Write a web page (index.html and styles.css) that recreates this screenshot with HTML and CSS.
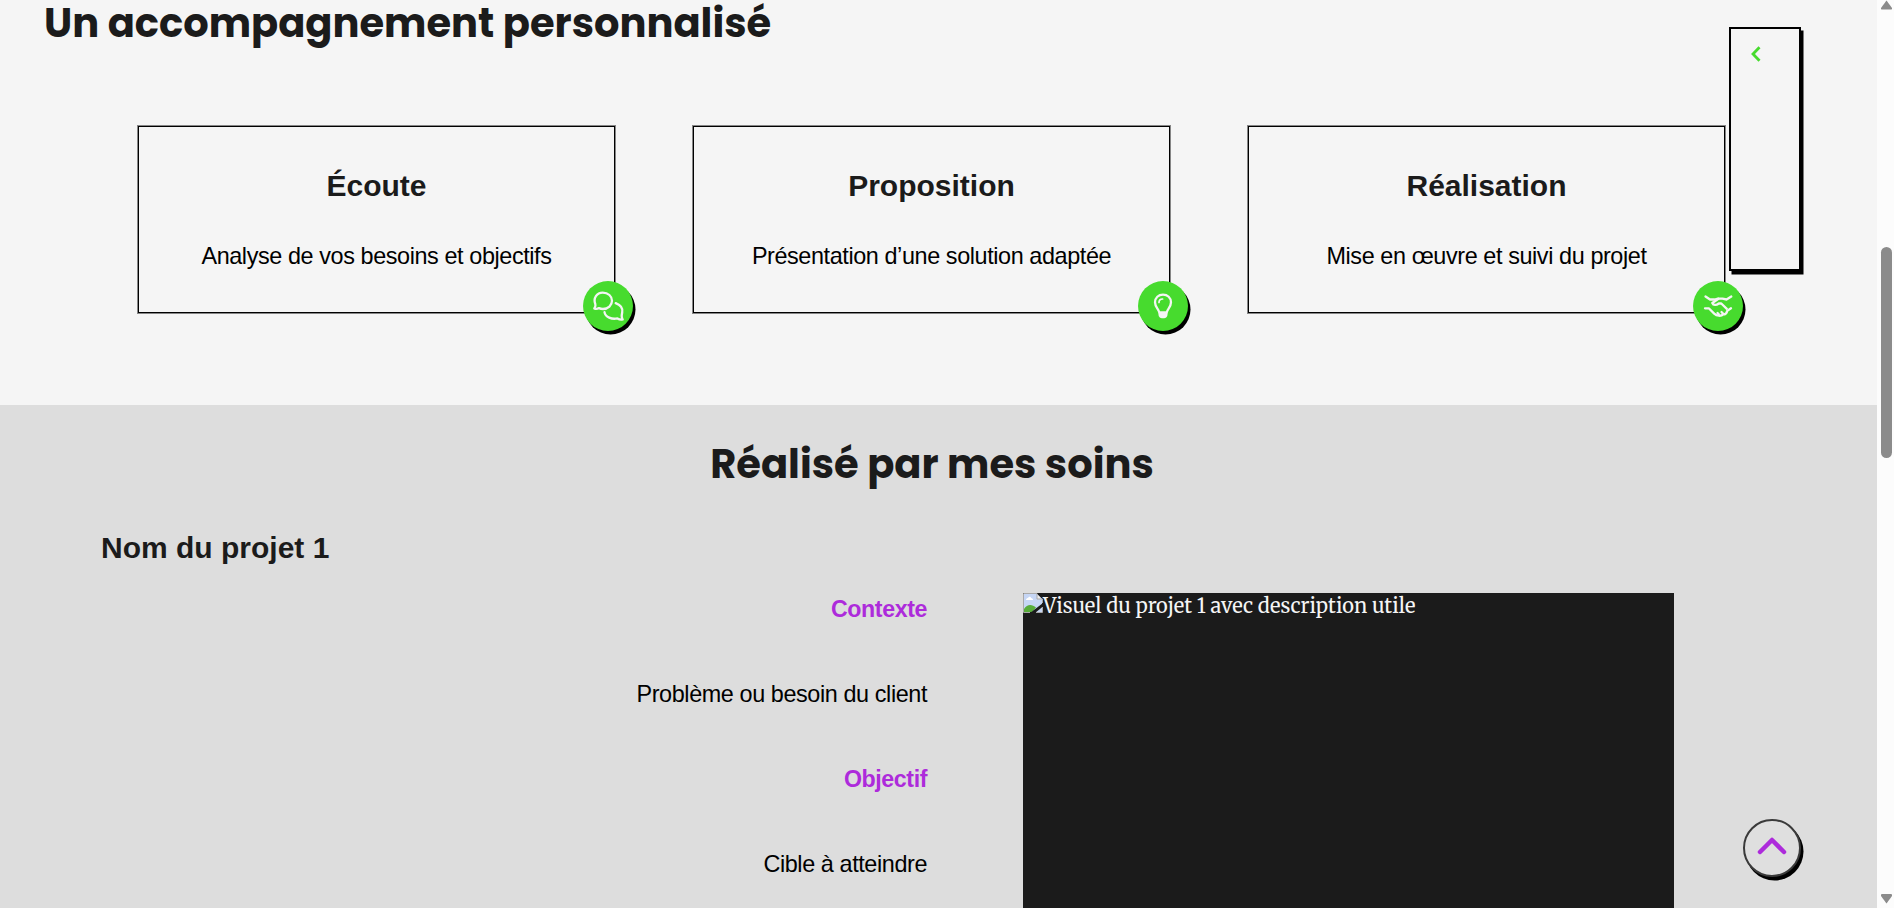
FILE: index.html
```html
<!DOCTYPE html>
<html lang="fr">
<head>
<meta charset="utf-8">
<title>Un accompagnement personnalisé</title>
<link rel="stylesheet" href="styles.css">
</head>
<body>
<div class="page">
  <main class="content">
    <section class="support">
      <h2 class="title title-support">Un accompagnement personnalisé</h2>
      <div class="cards">
        <article class="card">
          <h3 class="card-title">Écoute</h3>
          <p class="card-text">Analyse de vos besoins et objectifs</p>
          <span class="badge"><svg width="50" height="50" viewBox="0 0 50 50"><path d="M11.300 27.500c1.300-1.700 1.500-3 1-4.400C10 17 13.800 11.600 19.700 11.600c5.500 0 9.300 3.700 9.300 8.200s-3.900 8.200-9 8.200c-1.500 0-2.800-.3-4-.9-1.500.9-3 1.200-4.700.4z"/><path d="M32.700 22.200c4.500 1.700 7.300 5.200 6.500 9.300-.3 1.700-.5 2.500-.5 3.500 0 1.400.4 2.500 1 3.500-2 .5-3.700-.1-5.300-1.100-5.500 1.300-12.100-1.300-12.900-6.300"/></svg></span>
        </article>
        <article class="card">
          <h3 class="card-title">Proposition</h3>
          <p class="card-text">Présentation d’une solution adaptée</p>
          <span class="badge"><svg width="50" height="50" viewBox="0 0 50 50"><path d="M21.300 31.500c-.5-3.500-4.300-5.300-4.300-10.200 0-4.600 3.500-7.700 8-7.700s8 3.100 8 7.700c0 4.900-3.800 6.700-4.300 10.200z"/><path class="thin" d="M21 21.500c0-2 1.500-3.500 3.600-3.500"/><path class="solid" d="M20.500 32h9v1.500c0 2.200-1.600 3.700-3.500 3.700h-2c-1.900 0-3.500-1.500-3.500-3.700z"/></svg></span>
        </article>
        <article class="card">
          <h3 class="card-title">Réalisation</h3>
          <p class="card-text">Mise en œuvre et suivi du projet</p>
          <span class="badge"><svg width="50" height="50" viewBox="0 0 50 50"><path d="M12.500 15.500l4.500 3h4.500l3.500-.8h4.500l4 .8 4.800-3"/><path d="M25.500 17.800l-6.200 4.200c1 2.500 4 2.500 6.500.5h2.500l5.500 5.300"/><path d="M12 27.300h3.800l5.400 5.300c2.600 2.400 6.800 3 9 .8 2.700 0 3.500-1.200 4-3.500l3.800-2.600"/><path d="M24.500 32l1.300 1.300M28.500 31l1.500 1.600"/></svg></span>
        </article>
      </div>
    </section>
    <section class="work">
      <h2 class="title title-work">Réalisé par mes soins</h2>
      <h3 class="project-title">Nom du projet 1</h3>
      <div class="project">
        <div class="details">
          <h4 class="label">Contexte</h4>
          <p class="value">Problème ou besoin du client</p>
          <h4 class="label">Objectif</h4>
          <p class="value">Cible à atteindre</p>
        </div>
        <div class="visual">
          <svg class="broken" width="20" height="20" viewBox="0 0 20 20"><path fill="#c6d6f5" d="M1 1h13l5 5v13H1z"/><path fill="#fff" d="M3 7c0-1.500 1.500-2 2-2 1-2 3-1.500 3 0 1.500 0 2 1 2 2z"/><path fill="#58ad3b" d="M1 19v-3c3-5 8-5 12-1.500L9 19z"/><path fill="#1b1b1b" d="M7 20L20 10v3.500L12 20z"/><path fill="#eee" d="M14 1v5h5z"/><path fill="none" stroke="#a9a9a9" d="M7 19.500H.5V.5H14M14 .5V6h5.500M13 19.500h6.500V14M19.500 10V6"/></svg><span class="alt">Visuel du projet 1 avec description utile</span>
        </div>
      </div>
    </section>
  </main>
  <div class="scrollbar">
    <svg width="17" height="12" viewBox="0 0 17 12"><path d="M9.500 0.500L15 8Q15.500 9.500 14 9.500H5Q3.500 9.500 4 8z"/></svg>
    <div class="track"><div class="thumb"></div></div>
    <svg width="17" height="16" viewBox="0 0 17 16"><path d="M9.500 11.500L15 4Q15.500 2 14 2H5Q3.500 2 4 4z"/></svg>
  </div>
</div>
<nav class="side-menu"><svg width="10" height="16" viewBox="0 0 10 16"><path d="M8.500 1.200L2 8l6.500 6.800"/></svg></nav>
<a class="to-top" href="#"><svg width="30" height="18" viewBox="0 0 30 18"><path d="M3 15L15 3l12 12"/></svg></a>
</body>
</html>
```
FILE: styles.css
```css
* { box-sizing: border-box; }
body { margin: 0; height: 908px; overflow: hidden; font-family: "Liberation Sans", Arial, sans-serif; color: #000; background: #f5f5f5; }
h2, h3, h4, p { margin: 0; font-weight: 700; white-space: nowrap; }
.page { display: flex; height: 908px; }
.content { display: flex; flex-direction: column; width: 1877px; height: 908px; overflow: hidden; }
.title { font-family: Poppins, Inter, sans-serif; font-size: 40px; font-weight: 700; line-height: 46px; color: #1b1b1b; }
.support { height: 405px; padding: 0 151px 0 137px; }
.title-support { margin: 0 0 79px -93px; }
.cards { display: grid; grid-template-columns: repeat(3, 479px); gap: 76px; }
.card { position: relative; height: 189px; padding-top: 42px; text-align: center; border: 1px solid #868686; box-shadow: inset 0 0 0 1px #000; }
.card-title { font-size: 30px; line-height: 36px; color: #1b1b1b; }
.card-text { margin-top: 36px; font-size: 23.4px; letter-spacing: -0.4px; line-height: 32px; font-weight: 400; }
.badge { position: absolute; right: -18px; bottom: -18px; width: 50px; height: 50px; border-radius: 50%; background: #47db2e; box-shadow: 2.500px 3.500px 0 #000; }
.badge svg { display: block; fill: none; stroke: #f5f5f5; stroke-width: 2.300; stroke-linecap: round; stroke-linejoin: round; }
.badge .thin { stroke-width: 1.700; }
.badge .solid { fill: #f5f5f5; stroke: none; }
.work { height: 503px; padding: 36px 0 0 101px; background: #ddd; }
.title-work { width: 1662px; text-align: center; }
.project-title { margin-top: 43px; font-size: 30px; line-height: 36px; color: #1b1b1b; }
.project { display: flex; gap: 96px; margin-top: 27px; }
.details { width: 826px; text-align: right; font-size: 23.4px; letter-spacing: -0.4px; line-height: 32px; }
.label { color: #ad2bdb; font-size: 23.2px; }
.value { margin: 53px 0; font-weight: 400; }
.visual { display: flex; width: 651px; height: 315px; background: #1b1b1b; }
.alt { font-family: Merriweather, "DejaVu Serif", serif; font-size: 20px; line-height: 25px; color: #f5f5f5; white-space: nowrap; }
.scrollbar { display: flex; flex-direction: column; width: 17px; background: #fcfcfc; fill: #8b8b8b; }
.track { flex: 1; padding: 235px 0 0 4px; }
.thumb { width: 11px; height: 211px; border-radius: 6px; background: #8b8b8b; }
.side-menu { position: absolute; left: 1729px; top: 27px; width: 72px; height: 244px; padding: 17px 20px; border: 2px solid #000; background: #f5f5f5; box-shadow: 2.500px 3.500px 0 #000; }
.side-menu svg { display: block; fill: none; stroke: #47db2e; stroke-width: 2.800; }
.to-top { position: absolute; left: 1743px; top: 819px; display: flex; align-items: center; justify-content: center; width: 58px; height: 58px; padding-bottom: 5px; border: 2px solid #3a3a3a; border-radius: 50%; background: #dfdfdf; box-shadow: 2.500px 3.500px 0 #000; }
.to-top svg { fill: none; stroke: #ad2bdb; stroke-width: 4.500; stroke-linecap: round; stroke-linejoin: round; }
```
